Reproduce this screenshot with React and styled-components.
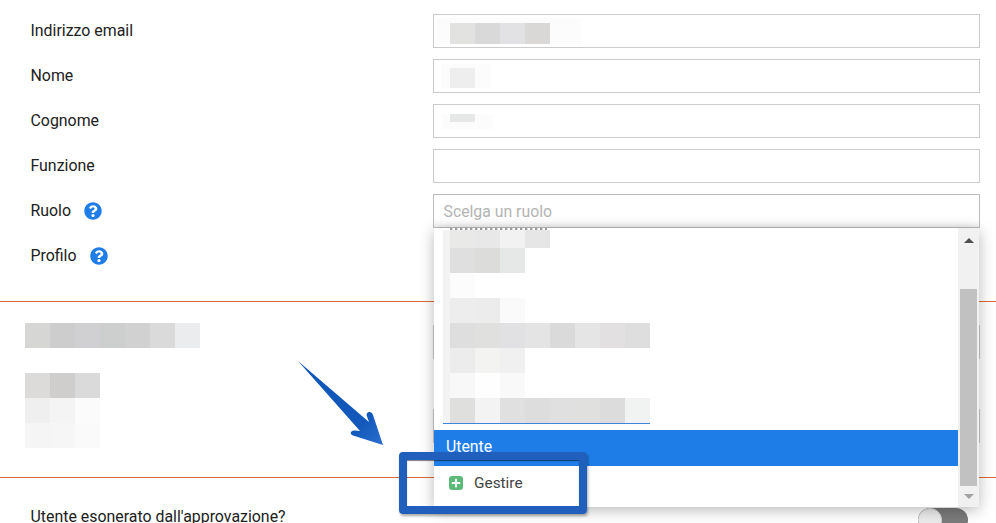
import React from "react";
import styled, { createGlobalStyle } from "styled-components";
import { FaQuestionCircle, FaPlus } from "react-icons/fa";

const GlobalStyle = createGlobalStyle`
  html, body {
    margin: 0;
    padding: 0;
    background: #fff;
  }
  body {
    overflow: hidden;
    font-family: Roboto, "Liberation Sans", sans-serif;
  }
`;

const Page = styled.div`
  position: relative;
  width: 996px;
  height: 523px;
  overflow: hidden;
  padding-top: 14px;
  box-sizing: border-box;
  color: #212121;
`;
const FormRow = styled.div`
  display: grid;
  grid-template-columns: 433px 547px;
  height: 34px;
  margin-bottom: 11px;
  align-items: center;
`;
const Label = styled.div`
  display: flex;
  align-items: center;
  gap: 13px;
  padding-left: 30.5px;
  font-size: 15.9px;
  line-height: 34px;
`;
const Help = styled(FaQuestionCircle)`
  width: 18px;
  height: 18px;
  color: #1e7de6;
`;
const FieldWrap = styled.div`
  position: relative;
  height: 34px;
`;
const Field = styled.div`
  display: flex;
  align-items: center;
  height: 34px;
  box-sizing: border-box;
  border: 1px solid ${(p) => (p.$active ? "#bcbcbc" : "#cbcbcb")};
  background: #fff;
  box-shadow: ${(p) => (p.$active ? "inset 0 -7px 6px -6px rgba(0,0,0,0.1)" : "none")};
`;
const Placeholder = styled.span`
  padding-left: 9.5px;
  font-size: 15.8px;
  color: #b4b4b4;
`;
const Patch = styled.div`
  display: flex;
  align-items: flex-end;
  width: ${(p) => p.$width}px;
  height: ${(p) => p.$height}px;
  margin-left: ${(p) => p.$left}px;
  padding-left: ${(p) => p.$inset}px;
  box-sizing: border-box;
  background: #fcfcfc;
`;
const Cell = styled.div`
  width: 25px;
  height: ${(p) => p.$height || 25}px;
  margin-bottom: ${(p) => p.$lift || 0}px;
  background: ${(p) => p.$color};
  flex: none;
`;
const MosaicRow = styled.div`
  display: flex;
  height: ${(p) => p.$height || 25}px;
`;
const Divider = styled.div`
  border-top: 1px solid #dd6a30;
  margin-top: ${(p) => p.$top || 0}px;
`;
const HiddenSection = styled.div`
  display: grid;
  grid-template-columns: 433px 547px;
  height: 175px;
`;
const LeftColumn = styled.div`
  display: flex;
  flex-direction: column;
  gap: 25px;
  padding: 21px 0 0 25px;
`;
const RightColumn = styled.div`
  display: flex;
  flex-direction: column;
  gap: 50px;
  padding-top: 23px;
`;
const BottomRow = styled.div`
  display: grid;
  grid-template-columns: 918px 50px;
  padding-top: 30px;
`;
const BottomLabel = styled.div`
  padding-left: 30.5px;
  font-size: 15.9px;
  line-height: 18px;
`;
const Toggle = styled.div`
  width: 50px;
  height: 24px;
  border-radius: 12px;
  background: #7b7b7b;
  position: relative;
`;
const Knob = styled.div`
  position: absolute;
  left: 0;
  top: 0;
  width: 24px;
  height: 24px;
  border-radius: 50%;
  box-sizing: border-box;
  background: #ececec;
  border: 1px solid #d8d8d8;
`;

const Dropdown = styled.div`
  position: absolute;
  z-index: 2;
  top: 34px;
  left: 1px;
  right: 1px;
  height: 279px;
  display: flex;
  background: #fff;
  box-shadow: 0 3px 14px rgba(0, 0, 0, 0.28);
`;
const Options = styled.div`
  flex: 1;
  display: flex;
  flex-direction: column;
`;
const Clipped = styled.div`
  width: 97px;
  height: 2px;
  margin-left: 16px;
  background: repeating-linear-gradient(90deg, #9a9a9a 0 2px, #ddd 2px 3px, #fff 3px 5px);
`;
const BlurredList = styled.div`
  width: 200px;
  margin-left: 9px;
  padding-left: 7px;
  background: linear-gradient(#f3f3f3, #f3f3f3) left / 7px 100% no-repeat;
  border-bottom: 1px solid #3f84d6;
  margin-bottom: 6px;
`;
const SelectedOption = styled.div`
  height: 36px;
  line-height: 34px;
  padding-left: 12px;
  background: #1e7de6;
  color: #fff;
  font-size: 15.8px;
`;
const ManageOption = styled.div`
  display: flex;
  align-items: center;
  gap: 11px;
  height: 41px;
  padding: 0 0 8px 15px;
  box-sizing: border-box;
  color: #444;
  font-size: 15.4px;
`;
const GreenIcon = styled.span`
  display: flex;
  align-items: center;
  justify-content: center;
  width: 14px;
  height: 14px;
  border-radius: 3px;
  background: #5cba79;
  color: #fff;
  font-size: 10px;
`;
const Scrollbar = styled.div`
  width: 21px;
  display: flex;
  flex-direction: column;
  align-items: center;
  background: #f1f1f1;
`;
const ArrowButton = styled.div`
  display: flex;
  justify-content: center;
  align-items: center;
  height: ${(p) => p.$height}px;
  width: 100%;
  &::before {
    content: "";
    border-left: 5px solid transparent;
    border-right: 5px solid transparent;
    ${(p) => (p.$down ? "border-top: 5px solid #a3a3a3;" : "border-bottom: 5px solid #505050;")}
  }
`;
const Thumb = styled.div`
  width: 17px;
  height: 197px;
  margin-top: 36px;
  background: #c1c1c1;
`;

const Callout = styled.div`
  position: absolute;
  z-index: 3;
  left: 399px;
  top: 452px;
  width: 188px;
  height: 62px;
  box-sizing: border-box;
  border: 8px solid #2060bc;
  border-radius: 4px;
  box-shadow: 1px 2px 3px rgba(0, 0, 0, 0.35), inset 0 1px 1px rgba(0, 0, 0, 0.5);
`;
const ArrowSvg = styled.svg`
  position: absolute;
  z-index: 3;
  left: 290px;
  top: 355px;
`;

const topRows = [
  { h: 18, c: ["#e9e9e8", "#e8e8e8", "#f2f2f2", "#e6e6e6"] },
  { c: ["#dfdfdf", "#dcdcdb", "#e6e7e7"] },
  { c: ["#fcfcfc"] },
  { c: ["#ededed", "#ececec", "#fafafa"] },
  { c: ["#dedede", "#e0e0de", "#e1e1e4", "#e4e4e4", "#dadada", "#e5e5e5", "#e2e0e0", "#dedede"] },
  { c: ["#ececec", "#f3f3f1", "#f0f0f0"] },
  { c: ["#f8f8f8", "#fefefe", "#f9f9f9"] },
  { c: ["#dfdfde", "#f3f3f3", "#e0e0e0", "#dddddd", "#e0e0e0", "#e0e0df", "#dcdcdc", "#f1f2f2"] },
];
const leftTitle = ["#d6d6d4", "#cdcdcd", "#d0d0d2", "#cdcfce", "#d1d1d1", "#dadadb", "#ebecee"];
const leftBlock = [
  ["#dcdbda", "#cfcecd", "#dadada"],
  ["#efefef", "#f4f4f4", "#fbfbfb"],
  ["#f5f5f5", "#f5f6f5", "#f9faf9"],
];

const Mosaic = ({ rows }) =>
  rows.map((row, i) => (
    <MosaicRow key={i} $height={row.h}>
      {row.c.map((color, j) => (
        <Cell key={j} $color={color} $height={row.h} />
      ))}
    </MosaicRow>
  ));

export default function App() {
  return (
    <Page>
      <GlobalStyle />
      <FormRow>
        <Label>Indirizzo email</Label>
        <Field>
          <Patch $width={145} $height={26} $left={2} $inset={14}>
            {["#e2e2e0", "#d9d9d9", "#e2e2e5", "#d9d8d6"].map((c) => (
              <Cell key={c} $color={c} $height={21} />
            ))}
          </Patch>
        </Field>
      </FormRow>
      <FormRow>
        <Label>Nome</Label>
        <Field>
          <Patch $width={50} $height={24} $left={7} $inset={9}>
            <Cell $color="#eeeeee" $height={20} />
          </Patch>
        </Field>
      </FormRow>
      <FormRow>
        <Label>Cognome</Label>
        <Field>
          <Patch $width={51} $height={15} $left={8} $inset={8}>
            <Cell $color="#e6e8e8" $height={8} $lift={7} />
          </Patch>
        </Field>
      </FormRow>
      <FormRow>
        <Label>Funzione</Label>
        <Field />
      </FormRow>
      <FormRow>
        <Label>
          Ruolo <Help />
        </Label>
        <FieldWrap>
          <Field $active>
            <Placeholder>Scelga un ruolo</Placeholder>
          </Field>
          <Dropdown>
            <Options>
              <Clipped />
              <BlurredList>
                <Mosaic rows={topRows} />
              </BlurredList>
              <SelectedOption>Utente</SelectedOption>
              <ManageOption>
                <GreenIcon>
                  <FaPlus />
                </GreenIcon>
                Gestire
              </ManageOption>
            </Options>
            <Scrollbar>
              <ArrowButton $height={25} />
              <Thumb />
              <ArrowButton $height={21} $down />
            </Scrollbar>
          </Dropdown>
        </FieldWrap>
      </FormRow>
      <FormRow>
        <Label>
          Profilo <Help />
        </Label>
      </FormRow>

      <Divider $top={28} />
      <HiddenSection>
        <LeftColumn>
          <MosaicRow>
            {leftTitle.map((c, i) => (
              <Cell key={i} $color={c} />
            ))}
          </MosaicRow>
          <div>
            <Mosaic rows={leftBlock.map((c) => ({ c }))} />
          </div>
        </LeftColumn>
        <RightColumn>
          <Field />
          <Field />
        </RightColumn>
      </HiddenSection>
      <Divider />
      <BottomRow>
        <BottomLabel>Utente esonerato dall'approvazione?</BottomLabel>
        <Toggle>
          <Knob />
        </Toggle>
      </BottomRow>

      <ArrowSvg width="100" height="100" viewBox="290 355 100 100">
        <defs>
          <linearGradient id="arrowFill" x1="0" y1="0" x2="1" y2="1">
            <stop offset="0" stopColor="#0f55b5" />
            <stop offset="0.75" stopColor="#1259bb" />
            <stop offset="1" stopColor="#2a6fcf" />
          </linearGradient>
        </defs>
        <path
          d="M298 361 L369 422 L366.5 415 Q367 411.5 370 412 Q372.5 412.5 373 415 L383 445 L353 435.5 Q350 434 351 432 Q352 430 355 430.5 L360 431 Z"
          fill="url(#arrowFill)"
        />
      </ArrowSvg>
      <Callout />
    </Page>
  );
}
